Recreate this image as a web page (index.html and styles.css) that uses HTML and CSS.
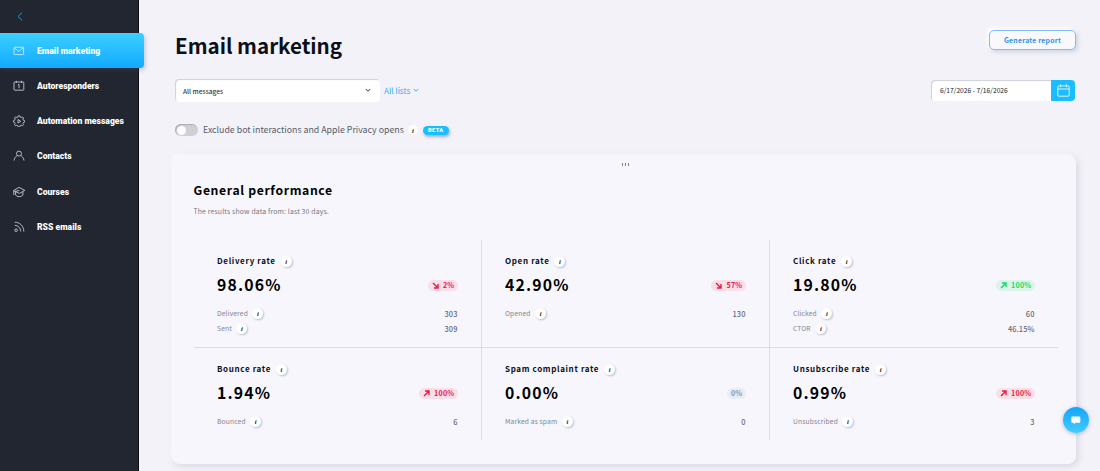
FILE: index.html
```html
<!DOCTYPE html>
<html lang="en">
<head>
    <meta charset="UTF-8">
    <meta name="viewport" content="width=device-width, initial-scale=1.0">
    <title>Email marketing</title>
    <link rel="stylesheet" href="styles.css">
</head>
<body>
    <aside class="sidebar">
        <a class="back" href="#">
            <svg width="6" height="9" viewBox="0 0 6 9"><path d="M5 .7 1 4.5l4 3.8"/></svg>
        </a>
        <nav>
            <a class="nav-item active" href="#">
                <svg class="nav-icon" viewBox="0 0 12 12"><rect x="1" y="2.2" width="9.6" height="7.4" rx=".8"/><path d="m1.4 2.8 4.4 3.6 4.4-3.6"/></svg>
                <span>Email marketing</span>
            </a>
            <a class="nav-item" href="#">
                <svg class="nav-icon" viewBox="0 0 12 12"><rect x="1" y="2" width="9.8" height="8.2" rx=".6"/><path d="M3.3.8v2M8.5.8v2M5 5l1-.8v4"/></svg>
                <span>Autoresponders</span>
            </a>
            <a class="nav-item" href="#">
                <svg class="nav-icon" viewBox="0 0 12 12"><path d="M5.2.8h1.6l.4 1.3 1 .4 1.2-.6 1.1 1.1-.6 1.2.4 1 1.2.4v1.5l-1.2.4-.4 1 .6 1.2-1.1 1.1-1.2-.6-1 .4-.4 1.2H5.2l-.4-1.2-1-.4-1.2.6-1.1-1.1.6-1.2-.4-1L.5 7.1V5.6l1.2-.4.4-1L1.5 3l1.1-1.1 1.2.6 1-.4z"/><path d="M5 4.5v3.6l2.7-1.8z"/></svg>
                <span>Automation messages</span>
            </a>
            <a class="nav-item" href="#">
                <svg class="nav-icon" viewBox="0 0 12 12"><circle cx="6" cy="3.6" r="2.5"/><path d="M1 10.5c.4-3 2-4 3.3-4.9M11 10.5c-.4-3-2-4-3.3-4.9"/></svg>
                <span>Contacts</span>
            </a>
            <a class="nav-item" href="#">
                <svg class="nav-icon" viewBox="0 0 12 12"><path d="M.4 4.6 6 1.4l5.8 3L6.5 7.4zM2.6 6v3c1.5 2.2 5.5 2.2 7.3 0V5.7M6.3 4.5 2 5.4M.8 5v4"/></svg>
                <span>Courses</span>
            </a>
            <a class="nav-item" href="#">
                <svg class="nav-icon" viewBox="0 0 12 12"><path d="M1.8 1.2c5 0 9 4 9 9.3M1.8 4.4c3.4 0 5.8 2.6 5.8 6.1"/><circle cx="3.1" cy="9.2" r="1.3"/></svg>
                <span>RSS emails</span>
            </a>
        </nav>
    </aside>

    <main class="content">
        <header class="page-header">
            <h1>Email marketing</h1>
            <button class="btn-report">Generate report</button>
        </header>

        <div class="filters">
            <div class="select">
                <span>All messages</span>
                <svg width="6" height="5" viewBox="0 0 6 5"><path d="m.8 1 2.2 2.3L5.2 1"/></svg>
            </div>
            <a class="lists" href="#">All lists
                <svg width="6" height="5" viewBox="0 0 6 5"><path d="m.8 1 2.2 2.3L5.2 1"/></svg>
            </a>
            <div class="date">
                <span class="date-value">6/17/2026 - 7/16/2026</span>
                <span class="date-btn">
                    <svg width="13" height="13" viewBox="0 0 13 13"><rect x=".8" y="1.9" width="11.4" height="10.3" rx="1"/><path d="M.8 5h11.4M3.6.3v3M9.4.3v3"/></svg>
                </span>
            </div>
        </div>

        <div class="toggle-row">
            <span class="toggle"></span>
            <span class="toggle-label">Exclude bot interactions and Apple Privacy opens</span>
            <i class="info small">i</i>
            <span class="beta">BETA</span>
        </div>

        <section class="card">
            <div class="handle"><span></span><span></span><span></span></div>
            <h2>General performance</h2>
            <p class="subtitle">The results show data from: last 30 days.</p>

            <div class="stats">
                <div class="stat">
                    <h3>Delivery rate <i class="info">i</i></h3>
                    <div class="rate"><strong>98.06%</strong>
                        <span class="badge red"><svg viewBox="0 0 7 7"><path d="m1 1 4.5 4.5M6 2v4H2"/></svg>2%</span></div>
                    <div class="row"><span>Delivered</span><i class="info">i</i><b>303</b></div>
                    <div class="row"><span>Sent</span><i class="info">i</i><b>309</b></div>
                </div>
                <div class="stat">
                    <h3>Open rate <i class="info">i</i></h3>
                    <div class="rate"><strong>42.90%</strong>
                        <span class="badge red"><svg viewBox="0 0 7 7"><path d="m1 1 4.5 4.5M6 2v4H2"/></svg>57%</span></div>
                    <div class="row"><span>Opened</span><i class="info">i</i><b>130</b></div>
                </div>
                <div class="stat">
                    <h3>Click rate <i class="info">i</i></h3>
                    <div class="rate"><strong>19.80%</strong>
                        <span class="badge green"><svg viewBox="0 0 7 7"><path d="M1 6l4.5-4.5M2 1h4v4"/></svg>100%</span></div>
                    <div class="row"><span>Clicked</span><i class="info">i</i><b>60</b></div>
                    <div class="row"><span>CTOR</span><i class="info">i</i><b>46.15%</b></div>
                </div>
                <div class="stat">
                    <h3>Bounce rate <i class="info">i</i></h3>
                    <div class="rate"><strong>1.94%</strong>
                        <span class="badge red"><svg viewBox="0 0 7 7"><path d="M1 6l4.5-4.5M2 1h4v4"/></svg>100%</span></div>
                    <div class="row"><span>Bounced</span><i class="info">i</i><b>6</b></div>
                </div>
                <div class="stat">
                    <h3>Spam complaint rate <i class="info">i</i></h3>
                    <div class="rate"><strong>0.00%</strong>
                        <span class="badge gray">0%</span></div>
                    <div class="row"><span>Marked as spam</span><i class="info">i</i><b>0</b></div>
                </div>
                <div class="stat">
                    <h3>Unsubscribe rate <i class="info">i</i></h3>
                    <div class="rate"><strong>0.99%</strong>
                        <span class="badge red"><svg viewBox="0 0 7 7"><path d="M1 6l4.5-4.5M2 1h4v4"/></svg>100%</span></div>
                    <div class="row"><span>Unsubscribed</span><i class="info">i</i><b>3</b></div>
                </div>
            </div>
        </section>
    </main>

    <button class="chat">
        <svg width="10" height="9" viewBox="0 0 10 9"><path d="M1.2.5h7.2q.9 0 .9.9v4.4q0 .9-.9.9H4.6L2.8 8.4V6.7H1.2q-.9 0-.9-.9V1.4q0-.9.9-.9z"/></svg>
    </button>
</body>
</html>
```

FILE: styles.css
```css
* {
    margin: 0;
    padding: 0;
    box-sizing: border-box;
}

body {
    display: flex;
    height: 471px;
    overflow: hidden;
    font-family: "Noto Sans CJK SC", "Noto Sans", sans-serif;
    color: #0b0f1a;
    background-color: #f3f2f8;
}

a {
    text-decoration: none;
}

svg {
    display: block;
    flex: none;
    fill: none;
    stroke: currentColor;
}

/* Sidebar */
.sidebar {
    width: 139px;
    flex: none;
    background-color: #222630;
    border-right: 1px solid #0c0e14;
}

.back {
    display: flex;
    align-items: center;
    height: 33px;
    padding: 0 0 1px 17px;
    color: #1b9fd0;
}

.nav-item {
    display: flex;
    align-items: center;
    height: 35.15px;
    padding: 1px 0 0 13px;
    gap: 12px;
    font: 900 8.6px/12px Roboto, sans-serif;
    white-space: nowrap;
    color: #fff;
}

.nav-item.active {
    width: 144px;
    position: relative;
    border-radius: 0 4px 4px 0;
    background: linear-gradient(#3dd0ff, #12a9ff);
    box-shadow: 1px 2px 4px rgba(60, 80, 120, 0.3);
}

.nav-icon {
    width: 12px;
    height: 12px;
    stroke-width: 0.9;
    opacity: 0.75;
}

/* Header and filters */
.content {
    flex: 1;
    padding: 30px 24px 0 36px;
}

.page-header {
    display: flex;
    justify-content: space-between;
    height: 49px;
}

h1 {
    font-size: 20.6px;
    line-height: 31px;
}

.btn-report {
    width: 87px;
    height: 20px;
    font: bold 6.9px/16px "Noto Sans CJK SC", sans-serif;
    letter-spacing: 0.2px;
    color: #2f93f5;
    background-color: #f8f8fd;
    border: 1px solid #83bdf8;
    border-radius: 5px;
    box-shadow: 2px 2px 4px rgba(120, 140, 180, 0.3), -2px -2px 4px #fff;
}

.filters {
    display: flex;
    align-items: center;
    height: 23px;
}

.select {
    display: flex;
    align-items: center;
    justify-content: space-between;
    width: 205px;
    height: 23px;
    padding: 0 9px 0 8px;
    font-size: 6.6px;
    font-weight: 500;
    line-height: 12px;
    color: #333842;
    background-color: #fff;
    border-radius: 4px;
    box-shadow: inset 1px 1px 1px #ccd0da;
}

.lists {
    display: flex;
    align-items: center;
    gap: 3px;
    margin-left: 4px;
    font-size: 8.1px;
    line-height: 12px;
    color: #35aef8;
}

.date {
    display: flex;
    width: 144px;
    height: 21px;
    margin: 0 1px 0 auto;
}

.date-value {
    flex: 1;
    padding-left: 9px;
    font-size: 6.7px;
    line-height: 21px;
    color: #22262e;
    background-color: #fff;
    border-radius: 4px 0 0 4px;
    box-shadow: inset 1px 1px 1px #ccd0da;
}

.date-btn {
    display: flex;
    align-items: center;
    justify-content: center;
    width: 24px;
    color: #d9f5ff;
    background-color: #1abdff;
    border-radius: 0 4px 4px 0;
}

.toggle-row {
    display: flex;
    align-items: center;
    height: 14px;
    margin-top: 21px;
}

.toggle {
    display: flex;
    align-items: center;
    width: 23px;
    height: 12px;
    padding-left: 2px;
    background-color: #cfd0d6;
    border-radius: 6px;
    box-shadow: inset 1px 1px 1px #a9acb8;
}

.toggle::before {
    content: "";
    width: 9px;
    height: 9px;
    background-color: #fff;
    border-radius: 50%;
}

.toggle-label {
    margin: 0 4px 0 5px;
    font-size: 8.8px;
    line-height: 14px;
    color: #5a5d66;
}

.info {
    display: inline-flex;
    align-items: center;
    justify-content: center;
    flex: none;
    width: 11px;
    height: 11px;
    font: italic bold 6.5px/11px "Liberation Serif", serif;
    letter-spacing: 0;
    color: #111;
    background-color: #fff;
    border-radius: 50%;
    box-shadow: 1px 1px 2px rgba(100, 110, 140, 0.4);
}

.info.small {
    width: 10px;
    height: 10px;
    box-shadow: none;
}

.beta {
    width: 26px;
    height: 9px;
    margin-left: 5px;
    font: 900 5.6px/9px Roboto, sans-serif;
    letter-spacing: 0.4px;
    text-align: center;
    color: #fff;
    background-color: #17bfff;
    border-radius: 5px;
    box-shadow: 1px 2px 3px rgba(90, 110, 150, 0.5);
}

/* General performance card */
.card {
    width: 904px;
    height: 309px;
    margin: 18px 0 0 -3px;
    padding: 0 18px 0 21.5px;
    background-color: #f7f6fc;
    border-radius: 8px;
    box-shadow: 2px 2px 7px rgba(110, 120, 155, 0.22), -1px -1px 3px #fff;
}

.handle {
    display: flex;
    justify-content: center;
    gap: 2px;
    padding-top: 8px;
    height: 25px;
}

.handle span {
    width: 1px;
    height: 3px;
    background-color: #7787a0;
}

h2 {
    font-size: 12.2px;
    line-height: 20px;
    letter-spacing: 0.65px;
    color: #000;
}

.subtitle {
    margin-top: 5px;
    font-size: 6.9px;
    line-height: 12px;
    letter-spacing: 0.15px;
    color: #747783;
}

.stats {
    display: grid;
    grid-template-columns: repeat(3, 288px);
    grid-template-rows: 108px 92px;
    margin-top: 23px;
}

.stat {
    padding: 14px 23px 0 23.5px;
    border-right: 1px solid #dbdbe3;
    border-bottom: 1px solid #dbdbe3;
}

.stat:nth-child(3n) {
    border-right: none;
}

.stat:nth-child(n+4) {
    border-bottom: none;
}

.stat h3 {
    display: flex;
    align-items: center;
    gap: 5px;
    font-size: 8px;
    line-height: 14px;
    letter-spacing: 0.65px;
}

.rate {
    display: flex;
    align-items: center;
    justify-content: space-between;
    height: 22px;
    margin: 6px 0 10px;
}

.rate strong {
    font-size: 15.8px;
    line-height: 22px;
    letter-spacing: 1.15px;
    color: #000;
}

.badge {
    display: flex;
    align-items: center;
    gap: 4px;
    height: 11px;
    padding: 0 3px 0 4px;
    font-size: 7.1px;
    font-weight: bold;
    line-height: 11px;
    letter-spacing: 0.3px;
    border-radius: 6px;
}

.badge svg {
    width: 7px;
    height: 7px;
    stroke-width: 1.4;
}

.red {
    color: #ea1744;
    background-color: #f9dfe8;
}

.green {
    color: #13dc66;
    background-color: #dcf3ec;
}

.gray {
    color: #8496ad;
    background-color: #e8edf4;
}

.row {
    display: flex;
    align-items: center;
    height: 15px;
    font-size: 6.7px;
    line-height: 15px;
    letter-spacing: 0.15px;
    color: #81848f;
}

.row .info {
    margin-left: 4.5px;
}

.row b {
    margin-left: auto;
    font-size: 7.4px;
    font-weight: 500;
    letter-spacing: 0.1px;
    color: #656b7b;
}

.chat {
    position: fixed;
    right: 11px;
    bottom: 38px;
    display: flex;
    align-items: center;
    justify-content: center;
    width: 26px;
    height: 26px;
    color: #fff;
    border: none;
    border-radius: 50%;
    background: linear-gradient(#15a4fb, #43ccff);
    box-shadow: 0 1px 4px rgba(60, 80, 120, 0.35);
}

.chat svg {
    fill: currentColor;
    stroke: none;
}
```
